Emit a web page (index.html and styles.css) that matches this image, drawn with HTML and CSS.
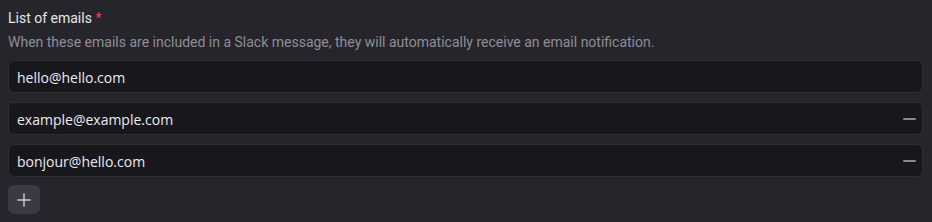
FILE: index.html
```html
<!DOCTYPE html>
<html>
<head>
<meta charset="utf-8">
<link rel="stylesheet" href="styles.css">
</head>
<body>
<div class="field">
  <div class="label">List of emails <span class="req">*</span></div>
  <div class="desc">When these emails are included in a Slack message, they will automatically receive an email notification.</div>
  <div class="list">
    <div class="row"><input class="input" value="hello@hello.com"></div>
    <div class="row"><input class="input" value="example@example.com"><span class="minus"></span></div>
    <div class="row"><input class="input" value="bonjour@hello.com"><span class="minus"></span></div>
  </div>
  <button class="add" aria-label="Add">
    <svg width="14" height="14" viewBox="0 0 14 14"><path d="M7 0.5V13.5M0.5 7H13.5" stroke="#c9c8cf" stroke-width="1.5"/></svg>
  </button>
</div>
</body>
</html>
```
FILE: styles.css
```css
html, body {
  margin: 0;
  background: #26252b;
  height: 100%;
}
.field {
  padding: 8px 9px 0 8px;
  display: flex;
  flex-direction: column;
  font-family: Roboto, "Liberation Sans", sans-serif;
}
.label {
  font-size: 14px;
  line-height: 20px;
  color: #e6e5ea;
}
.req { color: #e5484d; }
.desc {
  margin-top: 4px;
  font-size: 14px;
  line-height: 20px;
  color: #8f8e96;
}
.list {
  margin-top: 8px;
  display: flex;
  flex-direction: column;
  gap: 9px;
}
.row {
  position: relative;
}
.input {
  box-sizing: border-box;
  width: 100%;
  height: 33px;
  background: #18171c;
  border: 1px solid #2f2e35;
  border-radius: 6px;
  color: #ecebf0;
  font-family: "Open Sans", "Noto Sans", sans-serif;
  font-size: 14px;
  padding: 1px 8px 0;
  outline: none;
}
.minus {
  position: absolute;
  right: 7px;
  top: 16px;
  width: 13px;
  height: 2px;
  background: #8a8990;
  border-radius: 1px;
}
.add {
  margin-top: 8px;
  width: 32px;
  height: 29px;
  border: none;
  border-radius: 6px;
  background: #3b3a44;
  display: flex;
  align-items: center;
  justify-content: center;
  padding: 0;
}
```
